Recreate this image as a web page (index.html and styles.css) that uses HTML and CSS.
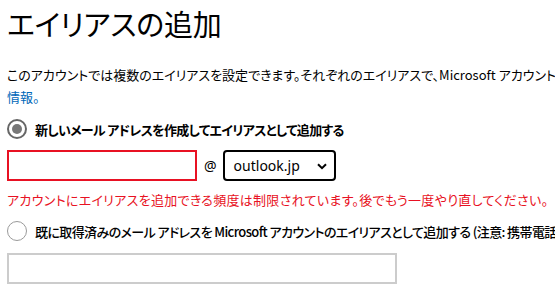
FILE: index.html
```html
<!DOCTYPE html>
<html lang="ja">
<head>
<meta charset="utf-8">
<link rel="stylesheet" href="styles.css">
</head>
<body>
<div class="page">
  <h1 class="title">エイリアスの追加</h1>
  <p class="intro">このアカウントでは複数のエイリアスを設定できます。それぞれのエイリアスで、Microsoft アカウントのすべての機能を利用できます。<a class="link" href="#">詳細<br>情報。</a></p>
  <div class="option">
    <span class="radio checked"></span>
    <span class="label bold">新しいメール アドレスを作成してエイリアスとして追加する</span>
  </div>
  <div class="newrow">
    <span class="field error-field"></span>
    <span class="at">@</span>
    <span class="select">outlook.jp
      <svg class="chev" width="10" height="7" viewBox="0 0 10 7"><path d="M1 1.2 L5 5.2 L9 1.2" fill="none" stroke="#000" stroke-width="2"/></svg>
    </span>
  </div>
  <div class="error">アカウントにエイリアスを追加できる頻度は制限されています。後でもう一度やり直してください。</div>
  <div class="option second">
    <span class="radio"></span>
    <span class="label semi">既に取得済みのメール アドレスを Microsoft アカウントのエイリアスとして追加する (注意: 携帯電話番号は使用できません)</span>
  </div>
  <div class="field existing"></div>
</div>
</body>
</html>
```
FILE: styles.css
```css
html, body {
  margin: 0;
  padding: 0;
  background: #fff;
  overflow: hidden;
}
.page {
  width: 1000px;
  padding: 0 0 0 7px;
  font-family: "Noto Sans CJK JP", "Noto Sans", sans-serif;
  font-feature-settings: "palt";
  color: #000;
}
.title {
  margin: 0;
  padding-top: 4px;
  font-size: 29px;
  font-weight: 400;
  line-height: 38px;
  letter-spacing: -0.2px;
}
.intro {
  margin: 22px 0 0;
  font-size: 13px;
  line-height: 22px;
  white-space: nowrap;
}
.link {
  color: #0067b8;
  text-decoration: none;
}
.option {
  display: flex;
  align-items: center;
  gap: 8px;
  margin-top: 10px;
  height: 22px;
  white-space: nowrap;
}
.radio {
  box-sizing: border-box;
  width: 20px;
  height: 20px;
  border-radius: 50%;
  border: 1.5px solid #9a9a9a;
  display: flex;
  align-items: center;
  justify-content: center;
}
.radio.checked {
  border: 2px solid #666;
}
.radio.checked::after {
  content: "";
  width: 10px;
  height: 10px;
  border-radius: 50%;
  background: #777;
}
.label {
  font-size: 13px;
}
.bold {
  font-weight: 700;
  letter-spacing: -0.7px;
}
.semi {
  font-weight: 500;
  letter-spacing: -0.6px;
}
.newrow {
  display: flex;
  align-items: center;
  margin-top: 10px;
}
.field {
  box-sizing: border-box;
  height: 31px;
  display: block;
}
.error-field {
  width: 190px;
  border: 2px solid #e81123;
}
.at {
  font-family: "Noto Sans", sans-serif;
  font-size: 14px;
  margin: 0 6px 0 7px;
}
.select {
  box-sizing: border-box;
  width: 113px;
  height: 31px;
  border: 2px solid #000;
  border-radius: 4px;
  display: flex;
  align-items: center;
  padding-left: 9px;
  font-family: "Noto Sans", sans-serif;
  font-size: 14px;
  position: relative;
}
.chev {
  position: absolute;
  right: 7px;
  top: 11px;
}
.error {
  margin-top: 8px;
  color: #e81123;
  font-size: 13px;
  line-height: 22px;
  letter-spacing: 0.3px;
  white-space: nowrap;
}
.option.second {
  margin-top: 9px;
}
.existing {
  width: 390px;
  border: 2px solid #ccc;
  margin-top: 11px;
}
```
